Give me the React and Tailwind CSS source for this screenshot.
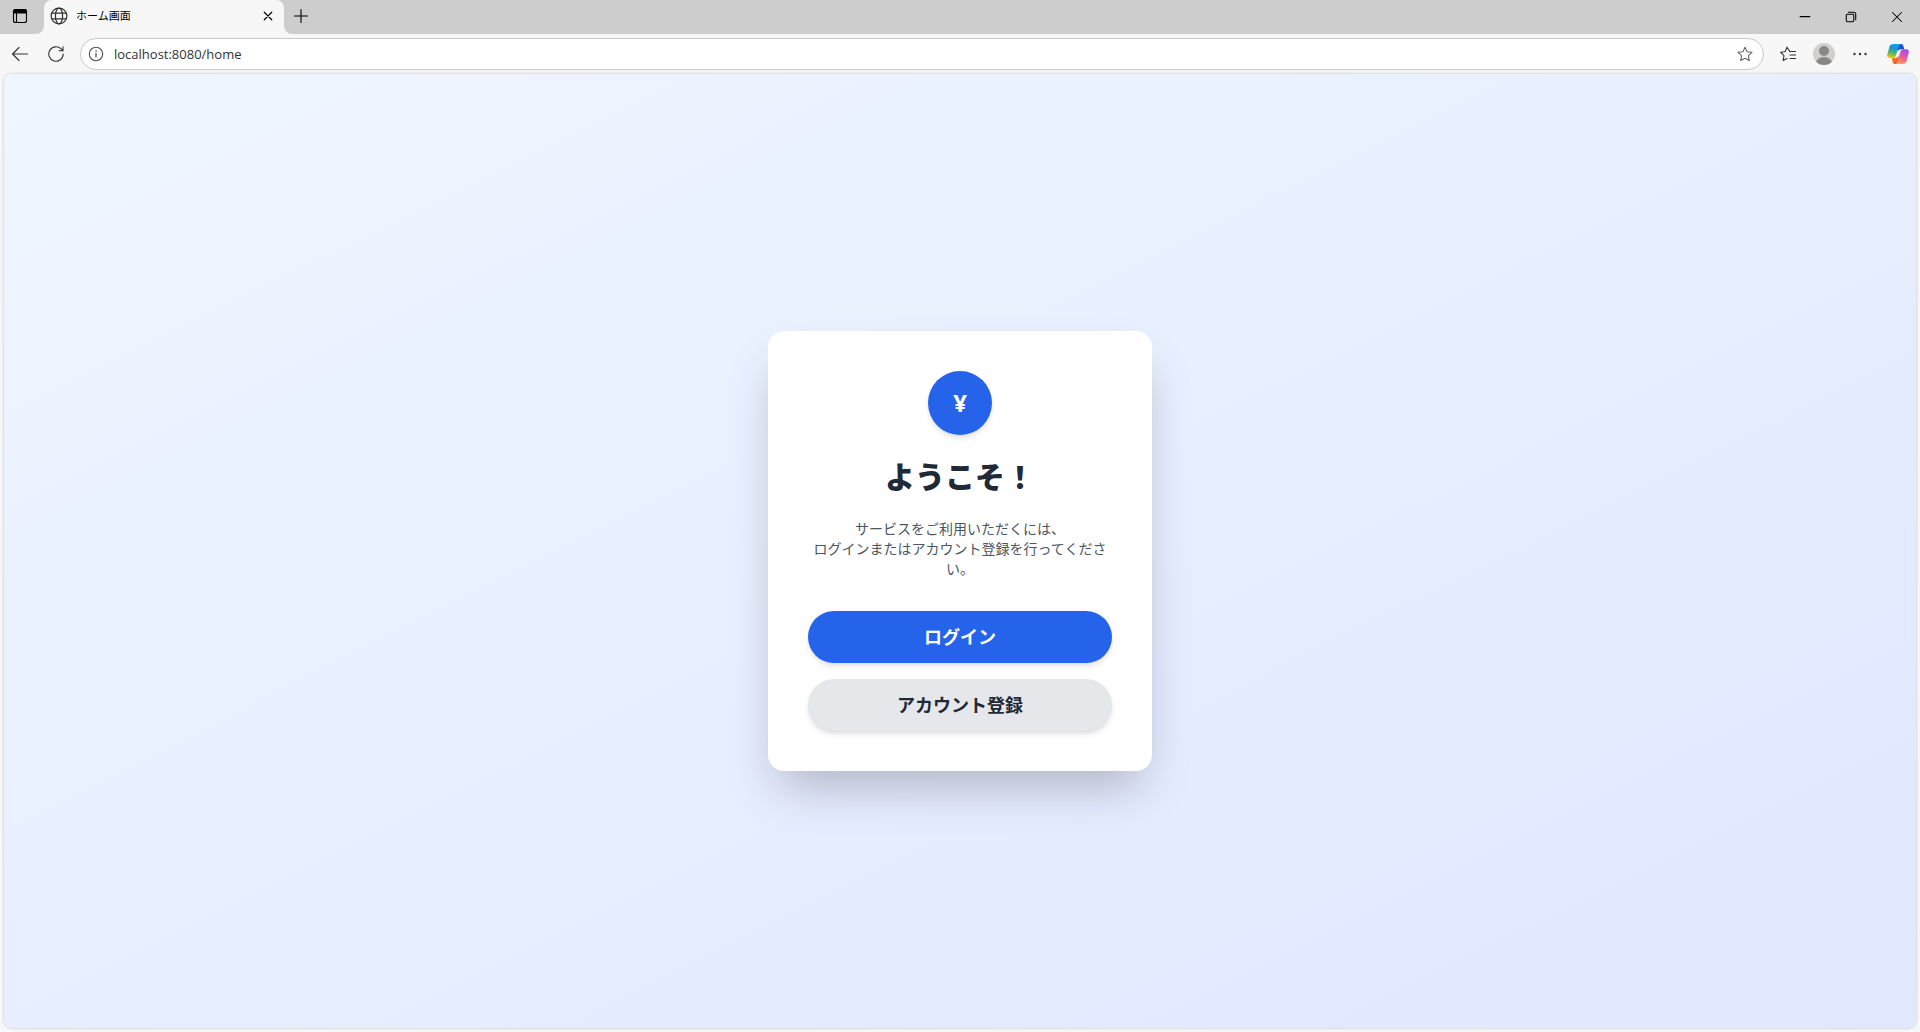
const star = 'M8 1.2l2.1 4.5 4.9.6-3.6 3.4.9 4.9L8 12.2l-4.3 2.4.9-4.9L1 6.3l4.9-.6z';

function Icon({ size = 16, children, className = '' }) {
  return (
    <svg
      width={size}
      height={size}
      viewBox="0 0 16 16"
      fill="none"
      stroke="currentColor"
      strokeWidth="1.1"
      strokeLinecap="round"
      strokeLinejoin="round"
      aria-hidden="true"
      className={`shrink-0 ${className}`}
    >
      {children}
    </svg>
  );
}

function Flare({ className, flip }) {
  return (
    <svg width="8" height="8" viewBox="0 0 8 8" aria-hidden="true" className={`absolute bottom-0 ${className}`}>
      <path d={flip ? 'M0 0a8 8 0 0 0 8 8H0z' : 'M8 0a8 8 0 0 1-8 8h8z'} fill="#f7f7f7" />
    </svg>
  );
}

function CopilotLogo() {
  return (
    <svg width="24" height="24" viewBox="0 0 24 24" aria-hidden="true">
      <defs>
        <linearGradient id="cpLeft" x1="0.5" y1="0" x2="0.3" y2="1">
          <stop offset="0" stopColor="#1b9de8" />
          <stop offset="0.3" stopColor="#1494d4" />
          <stop offset="0.62" stopColor="#4fb56a" />
          <stop offset="1" stopColor="#f0c90c" />
        </linearGradient>
        <linearGradient id="cpRight" x1="0.6" y1="0" x2="0.3" y2="1">
          <stop offset="0" stopColor="#a14df2" />
          <stop offset="0.4" stopColor="#d957b4" />
          <stop offset="0.7" stopColor="#fb6f74" />
          <stop offset="1" stopColor="#ffa850" />
        </linearGradient>
        <linearGradient id="cpTop" x1="0" y1="0" x2="1" y2="1">
          <stop offset="0" stopColor="#1c66dc" />
          <stop offset="1" stopColor="#1a3fb8" />
        </linearGradient>
        <linearGradient id="cpBottom" x1="0" y1="0" x2="1" y2="1">
          <stop offset="0" stopColor="#f5a623" />
          <stop offset="1" stopColor="#e8382d" />
        </linearGradient>
      </defs>
      <path d="M11 2h4c1.400 0 2 .8 2.400 2l.8 3.200h-3.400c-1.600 0-2.500.9-3 2.500z" fill="url(#cpTop)" />
      <path d="M13 22H9c-1.400 0-2-.8-2.400-2l-1-4h3.600c1.600 0 2.500-.9 3-2.500z" fill="url(#cpBottom)" />
      <path d="M7.800 2h7c-1.200.3-1.700 1.200-2.100 2.500l-2.900 9.300C9.300 15.300 8.500 16 7 16H3.800C1.300 16 .8 14.200 1.300 12.300l2.200-7.500C4 3 5.500 2 7.800 2z" fill="url(#cpLeft)" />
      <path d="M16.200 22h-7c1.200-.3 1.700-1.200 2.100-2.500l3-9.400c.5-1.900 1.400-2.900 3-2.900h2.900c2.500 0 3 1.900 2.500 3.800l-2.200 8.200c-.5 1.800-2 2.800-4.300 2.800z" fill="url(#cpRight)" />
    </svg>
  );
}

function TabStrip() {
  return (
    <div className="flex h-[34px] items-stretch bg-[#cdcdcd] text-black">
      <button aria-label="タブ操作メニュー" className="flex w-11 items-center pb-0.5 pl-3">
        <Icon>
          <rect x="1.500" y="1.500" width="13" height="13" rx="2" />
          <path d="M1.500 5V3.500Q1.500 1.500 3.500 1.500h9q2 0 2 2V5z" fill="currentColor" />
          <path d="M4.500 5v9" />
        </Icon>
      </button>
      <div className="relative flex w-60 items-center rounded-t-lg bg-[#f7f7f7] pr-2 pb-0.5 pl-1.5">
        <Flare className="right-full" />
        <Flare className="left-full" flip />
        <Icon size={18} className="text-[#333]">
          <circle cx="8" cy="8" r="7" />
          <ellipse cx="8" cy="8" rx="3.200" ry="7" />
          <path d="M1.700 5.500h12.600M1.700 10.500h12.600" />
        </Icon>
        <span className="ml-2 flex-1 font-['Open_Sans','Noto_Sans_CJK_JP',sans-serif] text-[11px] leading-4">ホーム画面</span>
        <button aria-label="タブを閉じる" className="flex size-4 items-center justify-center">
          <Icon size={12}>
            <path d="M3 3l10 10M13 3L3 13" strokeWidth="1.600" />
          </Icon>
        </button>
      </div>
      <button aria-label="新しいタブ" className="flex w-[34px] items-center justify-center pb-0.5">
        <Icon><path d="M8 1.500v13M1.500 8h13" /></Icon>
      </button>
      <div className="ml-auto flex">
        <button aria-label="最小化" className="flex w-[46px] items-center justify-center"><Icon size={12}><path d="M1.500 7.500h13" strokeWidth="1.400" /></Icon></button>
        <button aria-label="元に戻す" className="flex w-[46px] items-center justify-center">
          <Icon size={12}>
            <rect x="1.700" y="4.300" width="10" height="10" rx="1.500" strokeWidth="1.400" />
            <path d="M4.500 1.700h7.300a2.500 2.500 0 0 1 2.500 2.500v7.300" strokeWidth="1.400" />
          </Icon>
        </button>
        <button aria-label="閉じる" className="flex w-[46px] items-center justify-center"><Icon size={12}><path d="M2 2l12 12M14 2L2 14" strokeWidth="1.400" /></Icon></button>
      </div>
    </div>
  );
}

function Toolbar() {
  return (
    <div className="flex h-10 items-center pr-2.5 pl-3 text-[#333]">
      <button aria-label="戻る">
        <Icon><path d="M15.500 8H1M7 1.500L.6 8 7 14.500" /></Icon>
      </button>
      <button aria-label="更新" className="ml-5">
        <Icon><path d="M15.200 8a7.200 7.200 0 1 1-2.100-5.100L15 4.800M15 .8v4h-4" /></Icon>
      </button>
      <div className="ml-4 flex h-8 flex-1 items-center rounded-full border border-[#c9c9cb] bg-white pr-2.5 pl-[7px]">
        <button aria-label="サイト情報">
          <Icon className="text-[#555]">
            <circle cx="8" cy="8" r="6.700" />
            <path d="M8 7.500V11" strokeWidth="1.300" />
            <circle cx="8" cy="5" r=".5" fill="currentColor" strokeWidth=".5" />
          </Icon>
        </button>
        <input
          aria-label="アドレス"
          defaultValue="localhost:8080/home"
          className="ml-2.5 min-w-0 flex-1 bg-transparent font-['Open_Sans',sans-serif] text-[13px] leading-5 text-[#333] outline-none"
        />
        <button aria-label="お気に入りに追加">
          <Icon className="text-[#666]"><path d={star} /></Icon>
        </button>
      </div>
      <button aria-label="お気に入り" className="ml-4">
        <Icon>
          <path d="M10 5.700L7 1.200l-1.900 4.500L.6 6.300 4 9.700l-.9 4.900L7 12.500" />
          <path d="M10 5.500h6M10 9h6M10 12.500h6" />
        </Icon>
      </button>
      <button aria-label="プロフィール" className="ml-4">
        <svg width="24" height="24" viewBox="0 0 24 24" aria-hidden="true">
          <clipPath id="avatarClip"><circle cx="12" cy="12" r="11" /></clipPath>
          <g clipPath="url(#avatarClip)">
            <rect width="24" height="24" fill="#d2d0ce" />
            <circle cx="12" cy="9" r="5" fill="#8a8886" />
            <ellipse cx="12" cy="21" rx="8" ry="6" fill="#8a8886" />
          </g>
        </svg>
      </button>
      <button aria-label="設定など" className="ml-4">
        <Icon>
          <g fill="currentColor" stroke="none">
            <circle cx="2.500" cy="8" r="1.200" /><circle cx="8" cy="8" r="1.200" /><circle cx="13.500" cy="8" r="1.200" />
          </g>
        </Icon>
      </button>
      <button aria-label="Copilot" className="ml-[18px]"><CopilotLogo /></button>
    </div>
  );
}

export default function App() {
  return (
    <div className="flex min-h-screen flex-col bg-[#f7f7f7]">
      <header>
        <TabStrip />
        <Toolbar />
      </header>
      <main
        lang="ja"
        className="mx-1 mb-1 flex flex-1 items-center justify-center rounded-lg bg-[linear-gradient(to_bottom_right,#eff6ff,#e0e7ff)] font-['Open_Sans','Noto_Sans_CJK_JP',sans-serif] shadow-[0_0_3px_rgba(0,0,0,0.25)]"
      >
        <section className="w-full max-w-sm rounded-2xl bg-white p-10 text-center shadow-2xl">
          <div className="mx-auto mb-6 flex size-16 items-center justify-center rounded-full bg-[#2563eb] text-2xl font-bold text-white shadow-md">
            ¥
          </div>
          <h1 className="mb-6 text-3xl font-extrabold text-[#1f2937]">ようこそ！</h1>
          <p className="mb-8 text-sm text-[#4b5563]">
            サービスをご利用いただくには、
            <br />
            ログインまたはアカウント登録を行ってください。
          </p>
          <div className="flex flex-col gap-4">
            <button className="rounded-full bg-[#2563eb] py-3 text-lg font-bold text-white shadow-md">ログイン</button>
            <button className="rounded-full bg-[#e5e7eb] py-3 text-lg font-bold text-[#1f2937] shadow-md">アカウント登録</button>
          </div>
        </section>
      </main>
    </div>
  );
}
